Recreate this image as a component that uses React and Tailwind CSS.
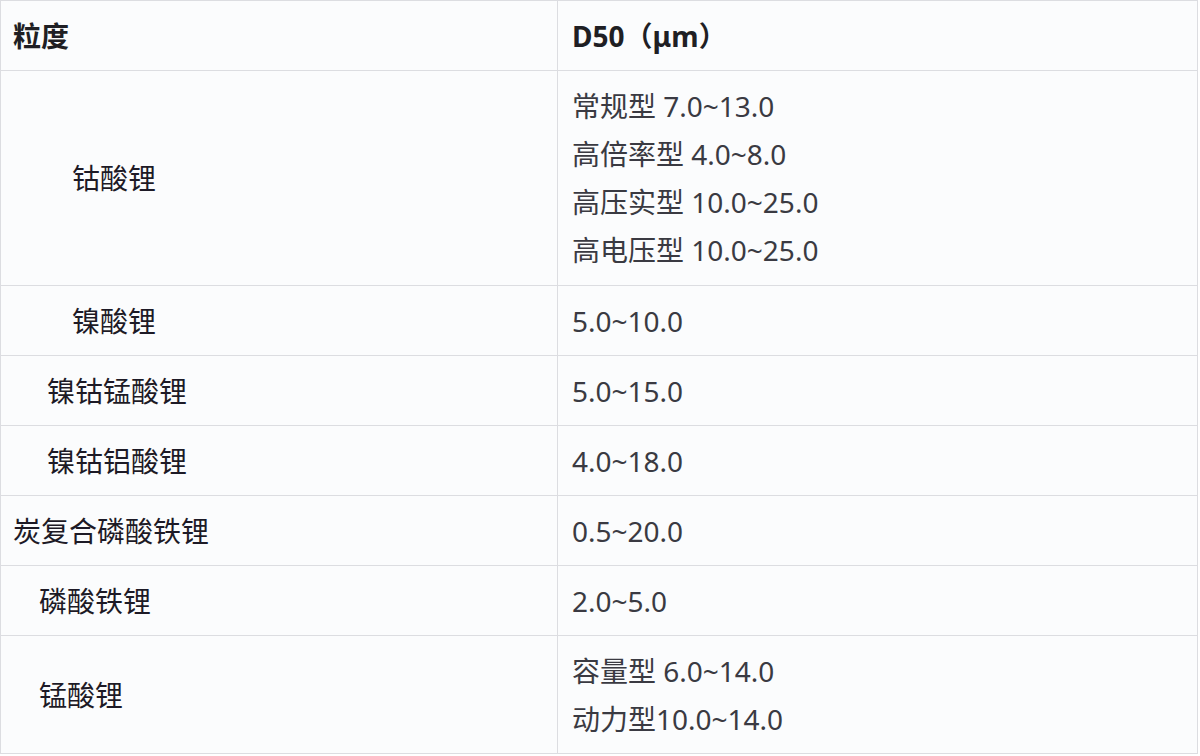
import React from "react";

const rows = [
  { name: "钴酸锂", pl: "pl-[71px]", h: "h-[215px]", vals: ["常规型 7.0~13.0", "高倍率型 4.0~8.0", "高压实型 10.0~25.0", "高电压型 10.0~25.0"] },
  { name: "镍酸锂", pl: "pl-[71px]", h: "h-[70px]", vals: ["5.0~10.0"] },
  { name: "镍钴锰酸锂", pl: "pl-[46px]", h: "h-[70px]", vals: ["5.0~15.0"] },
  { name: "镍钴铝酸锂", pl: "pl-[46px]", h: "h-[70px]", vals: ["4.0~18.0"] },
  { name: "炭复合磷酸铁锂", pl: "pl-[12px]", h: "h-[70px]", vals: ["0.5~20.0"] },
  { name: "磷酸铁锂", pl: "pl-[38px]", h: "h-[70px]", vals: ["2.0~5.0"] },
  { name: "锰酸锂", pl: "pl-[38px]", h: "h-[117px]", vals: ["容量型 6.0~14.0", "动力型10.0~14.0"] },
];

export default function App() {
  return (
    <div
      className="w-[1200px] h-[756px] bg-white overflow-hidden"
      style={{ fontFamily: '"Noto Sans", "Noto Sans CJK SC", sans-serif' }}
    >
      <div className="w-[1198px] border border-[#dcdde1] bg-[#fbfcfd]">
        <div className="flex h-[70px] border-b border-[#dcdde1]">
          <div className="w-[557px] border-r border-[#dcdde1] flex items-center pl-[12px] text-[28px] font-bold text-[#1f1f24]">
            粒度
          </div>
          <div className="flex-1 flex items-center pl-[14px] text-[28px] font-bold text-[#1f1f24]">
            D50（μm）
          </div>
        </div>
        {rows.map((r, i) => (
          <div
            key={i}
            className={`flex ${r.h} ${i < rows.length - 1 ? "border-b border-[#dcdde1]" : ""}`}
          >
            <div className={`w-[557px] border-r border-[#dcdde1] flex items-center ${r.pl} text-[28px] text-[#1d1a26]`}>
              {r.name}
            </div>
            <div className="flex-1 flex flex-col justify-center pl-[14px] text-[28px] text-[#3a3a42] leading-[48px]">
              {r.vals.map((v, j) => (
                <div key={j}>{v}</div>
              ))}
            </div>
          </div>
        ))}
      </div>
    </div>
  );
}
